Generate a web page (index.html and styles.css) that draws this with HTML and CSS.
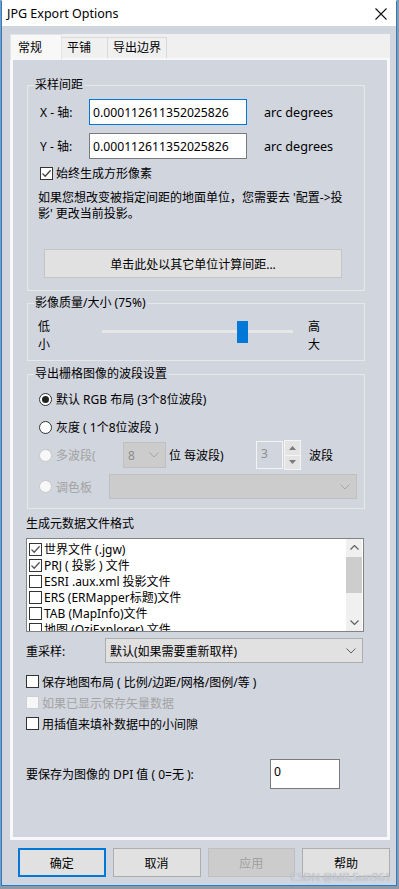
FILE: index.html
```html
<!DOCTYPE html>
<html lang="zh-CN">
<head>
  <meta charset="UTF-8">
  <title>JPG Export Options</title>
  <link rel="stylesheet" href="styles.css">
</head>
<body>
  <div class="window">
    <div class="titlebar">
      <span class="title">JPG Export Options</span>
      <svg class="close" width="12" height="12" viewBox="0 0 12 12"><path d="M0.5 0.5L11.5 11.5M11.5 0.5L0.5 11.5" stroke="#111" stroke-width="1.1" fill="none"/></svg>
    </div>

    <div class="client">
      <div class="tabs">
        <div class="tab-strip">
          <div class="tab active">常规</div>
          <div class="tab t2">平铺</div>
          <div class="tab t3">导出边界</div>
        </div>

        <div class="page">
          <fieldset class="group g-spacing">
            <legend>采样间距</legend>
            <div class="field-row row-x">
              <span class="axis">X - 轴:</span>
              <input class="textbox focused" type="text" value="0.000112611352025826">
              <span class="unit">arc degrees</span>
            </div>
            <div class="field-row">
              <span class="axis">Y - 轴:</span>
              <input class="textbox" type="text" value="0.000112611352025826">
              <span class="unit">arc degrees</span>
            </div>
            <div class="check-row square">
              <span class="cb"><svg width="11" height="11" viewBox="0 0 11 11"><path d="M1.5 5.5L4.2 8.2L9.6 2.2" stroke="#444" stroke-width="1.3" fill="none"/></svg></span>
              <span>始终生成方形像素</span>
            </div>
            <p class="note">如果您想改变被指定间距的地面单位，您需要去 '配置-&gt;投<br>影' 更改当前投影。</p>
            <button class="btn calc">单击此处以其它单位计算间距...</button>
          </fieldset>

          <fieldset class="group g-quality">
            <legend>影像质量/大小 (75%)</legend>
            <div class="quality">
              <div class="ends"><span>低</span><span>小</span></div>
              <div class="slider">
                <div class="track"></div>
                <div class="thumb"></div>
              </div>
              <div class="ends right"><span>高</span><span>大</span></div>
            </div>
          </fieldset>

          <fieldset class="group g-bands">
            <legend>导出栅格图像的波段设置</legend>
            <div class="band-row r1">
              <span class="rb checked"></span>
              <span>默认 RGB 布局 (3个8位波段)</span>
            </div>
            <div class="band-row r2">
              <span class="rb"></span>
              <span>灰度 ( 1个8位波段 )</span>
            </div>
            <div class="band-row r3">
              <span class="rb disabled"></span>
              <span class="dim multi">多波段(</span>
              <div class="combo disabled bits">
                <span>8</span>
                <svg width="10" height="6" viewBox="0 0 10 6"><path d="M0.5 0.5L5 5L9.5 0.5" stroke="#a6a6a6" fill="none"/></svg>
              </div>
              <span class="per">位 每波段)</span>
              <div class="spin">
                <div class="spin-box">3</div>
                <div class="spin-btns">
                  <span><svg width="7" height="4" viewBox="0 0 7 4"><path d="M0 4L3.5 0L7 4Z" fill="#7a7a7a"/></svg></span>
                  <span><svg width="7" height="4" viewBox="0 0 7 4"><path d="M0 0L3.5 4L7 0Z" fill="#7a7a7a"/></svg></span>
                </div>
              </div>
              <span class="bands">波段</span>
            </div>
            <div class="band-row r4">
              <span class="rb disabled"></span>
              <span class="dim palette">调色板</span>
              <div class="combo disabled palette-box">
                <span></span>
                <svg width="10" height="6" viewBox="0 0 10 6"><path d="M0.5 0.5L5 5L9.5 0.5" stroke="#a6a6a6" fill="none"/></svg>
              </div>
            </div>
          </fieldset>

          <div class="section-label">生成元数据文件格式</div>
          <div class="listbox">
            <div class="items">
              <div class="item"><span class="cb"><svg width="11" height="11" viewBox="0 0 11 11"><path d="M1.5 5.5L4.2 8.2L9.6 2.2" stroke="#555" stroke-width="1.3" fill="none"/></svg></span><span>世界文件 (.jgw)</span></div>
              <div class="item"><span class="cb"><svg width="11" height="11" viewBox="0 0 11 11"><path d="M1.5 5.5L4.2 8.2L9.6 2.2" stroke="#555" stroke-width="1.3" fill="none"/></svg></span><span>PRJ ( 投影 ) 文件</span></div>
              <div class="item"><span class="cb"></span><span>ESRI .aux.xml 投影文件</span></div>
              <div class="item"><span class="cb"></span><span>ERS (ERMapper标题)文件</span></div>
              <div class="item"><span class="cb"></span><span>TAB (MapInfo)文件</span></div>
              <div class="item"><span class="cb"></span><span>地图 (OziExplorer) 文件</span></div>
            </div>
            <div class="scrollbar">
              <div class="sb-arrow"><svg width="9" height="5" viewBox="0 0 9 5"><path d="M0.5 4.5L4.5 0.5L8.5 4.5" stroke="#606060" stroke-width="1.2" fill="none"/></svg></div>
              <div class="sb-track"><div class="sb-thumb"></div></div>
              <div class="sb-arrow"><svg width="9" height="5" viewBox="0 0 9 5"><path d="M0.5 0.5L4.5 4.5L8.5 0.5" stroke="#606060" stroke-width="1.2" fill="none"/></svg></div>
            </div>
          </div>

          <div class="resample-row">
            <span class="resample-label">重采样:</span>
            <div class="combo resample">
              <span>默认(如果需要重新取样)</span>
              <svg width="10" height="6" viewBox="0 0 10 6"><path d="M0.5 0.5L5 5L9.5 0.5" stroke="#606060" fill="none"/></svg>
            </div>
          </div>

          <div class="options">
            <div class="check-row"><span class="cb"></span><span>保存地图布局 ( 比例/边距/网格/图例/等 )</span></div>
            <div class="check-row disabled"><span class="cb"></span><span>如果已显示保存矢量数据</span></div>
            <div class="check-row"><span class="cb"></span><span>用插值来填补数据中的小间隙</span></div>
          </div>

          <div class="dpi-row">
            <span class="dpi-label">要保存为图像的 DPI 值 ( 0=无 ):</span>
            <input class="textbox dpi" type="text" value="0">
          </div>
        </div>
      </div>

      <div class="actions">
        <button class="btn action default">确定</button>
        <button class="btn action">取消</button>
        <button class="btn action" disabled>应用</button>
        <button class="btn action">帮助</button>
      </div>
    </div>

    <div class="watermark">CSDN @MR.Sun961</div>
  </div>
</body>
</html>
```

FILE: styles.css
```css
* { box-sizing: border-box; }

body {
  margin: 0;
  background: #8f99a6;
  font-family: "Noto Sans", "Noto Sans CJK SC", sans-serif;
  font-size: 12px;
  color: #000;
}

.window {
  position: relative;
  width: 396px;
  height: 886px;
  margin-left: 1px;
  border: 1px solid #1c7ed6;
  border-top-color: #fff;
  background: #d1d5de;
}

.titlebar {
  height: 25px;
  display: flex;
  align-items: center;
  justify-content: space-between;
  padding: 0 9px 0 5px;
  background: #fff;
}

.title {
  font-size: 12.5px;
}

.client {
  padding: 8px 6px 0 8px;
}

/* tab control */
.tabs {
  height: 806px;
  display: flex;
  flex-direction: column;
}

.tab-strip {
  height: 24px;
  display: flex;
  align-items: flex-end;
  background: #f0f0f0;
}

.tab {
  height: 21px;
  line-height: 19px;
  padding-left: 5px;
  margin-left: -1px;
  border: 1px solid #d9d9d9;
  border-bottom: none;
  background: #f0f0f0;
}

.tab.active {
  position: relative;
  z-index: 1;
  width: 52px;
  height: 26px;
  margin-left: 0;
  margin-bottom: -2px;
  padding: 4px 0 0 7px;
  line-height: 18px;
  background: #f8f8f8;
  border-color: #e4e4e4;
}

.tab.t2 { width: 47px; }
.tab.t3 { width: 60px; }

.page {
  flex: 1;
  padding: 17px 0 0 13px;
  border: 3px solid #f8f8f8;
  border-top-width: 2px;
  background: #d1d5de;
}

/* group boxes */
.group {
  min-width: 0;
  margin: 0 22px 0 1px;
  padding: 0;
  border: 1px solid #e6e7ea;
}

.group legend {
  padding: 0 1px;
  line-height: 16px;
}

.g-spacing {
  padding: 6px 0 12px 12px;
}

.g-spacing legend { margin-left: -6px; }

.field-row {
  height: 26px;
  display: flex;
  align-items: center;
}

.row-x {
  margin-bottom: 8px;
}

.axis {
  width: 49px;
}

.textbox {
  width: 158px;
  height: 26px;
  padding: 0 3px;
  border: 1px solid #7a7a7a;
  background: #fff;
  font: inherit;
  font-size: 12.2px;
  color: #000;
  outline: none;
}

.textbox.focused {
  border-color: #0078d7;
}

.unit {
  margin-left: 17px;
  font-size: 12.6px;
}

.check-row {
  height: 16px;
  display: flex;
  align-items: center;
  gap: 3px;
}

.square {
  margin-top: 6px;
}

.cb {
  width: 13px;
  height: 13px;
  flex: none;
  display: flex;
  align-items: center;
  justify-content: center;
  border: 1px solid #333;
  background: #fff;
}

.note {
  margin: 9px 0 0 -2px;
  line-height: 16px;
  white-space: nowrap;
}

.btn {
  height: 29px;
  padding: 0;
  border: 1px solid #c4c4c4;
  background: #e1e1e1;
  font: inherit;
  color: #000;
}

.calc {
  display: block;
  width: 298px;
  margin: 27px 0 0 4px;
}

/* quality slider */
.g-quality {
  margin-top: 4px;
  padding: 7px 0 6px 10px;
}

.g-quality legend { margin-left: -4px; }

.quality {
  height: 36px;
  display: flex;
}

.ends {
  width: 12px;
  display: flex;
  flex-direction: column;
  line-height: 18px;
}

.ends.right {
  margin-left: 15px;
}

.slider {
  position: relative;
  width: 191px;
  margin-left: 52px;
}

.track {
  height: 3px;
  margin-top: 12px;
  background: #e7e7e7;
}

.thumb {
  position: absolute;
  top: 3px;
  left: 135px;
  width: 11px;
  height: 22px;
  background: #0078d7;
}

/* band settings */
.g-bands {
  margin-top: 5px;
  padding: 9px 0 9px 11px;
}

.g-bands legend { margin-left: -5px; }

.band-row {
  display: flex;
  align-items: center;
}

.r1 { height: 16px; }
.r2 { height: 16px; margin-top: 12px; }
.r3 { height: 28px; margin-top: 6px; }
.r4 { height: 25px; margin-top: 5px; }

.rb {
  width: 13px;
  height: 13px;
  flex: none;
  margin-right: 4px;
  display: flex;
  align-items: center;
  justify-content: center;
  border: 1px solid #333;
  border-radius: 50%;
  background: #fff;
}

.rb.checked::after {
  content: "";
  width: 7px;
  height: 7px;
  border-radius: 50%;
  background: #222;
}

.rb.disabled {
  border-color: #c8c8c8;
  background: #f7f7f7;
}

.dim {
  color: #a3a3a3;
}

.multi { width: 67px; }
.palette { width: 53px; }

.combo {
  height: 25px;
  display: flex;
  align-items: center;
  justify-content: space-between;
  padding: 0 6px 0 4px;
  border: 1px solid #adadad;
  background: #e1e1e1;
}

.combo.disabled {
  border-color: #bfbfbf;
  background: #cccccc;
  color: #8d8d8d;
}

.bits {
  width: 43px;
  height: 26px;
}

.palette-box {
  width: 248px;
  height: 25px;
}

.per {
  width: 87px;
  margin-left: 3px;
}

.spin {
  display: flex;
  align-items: center;
}

.spin-box {
  width: 27px;
  height: 28px;
  padding: 3px 0 0 4px;
  border: 1px solid #f4f4f4;
  color: #8d8d8d;
}

.spin-btns {
  width: 17px;
  height: 30px;
  margin-left: 1px;
  display: flex;
  flex-direction: column;
  border: 1px solid #f4f4f4;
  background: #e4e4e4;
}

.spin-btns span {
  flex: 1;
  display: flex;
  align-items: center;
  justify-content: center;
}

.spin-btns span + span {
  border-top: 1px solid #f4f4f4;
}

.bands {
  margin-left: 8px;
}

/* metadata list */
.section-label {
  margin-top: 7px;
  line-height: 16px;
}

.listbox {
  width: 338px;
  height: 94px;
  margin-top: 6px;
  display: flex;
  border: 1px solid #828282;
  background: #fff;
}

.items {
  flex: 1;
  padding: 2px 0 0 2px;
  overflow: hidden;
}

.item {
  height: 16px;
  display: flex;
  align-items: center;
  gap: 2px;
  white-space: nowrap;
}

.scrollbar {
  width: 16px;
  margin-right: 1px;
  display: flex;
  flex-direction: column;
  background: #f0f0f0;
}

.sb-arrow {
  height: 17px;
  display: flex;
  align-items: center;
  justify-content: center;
}

.sb-track {
  flex: 1;
}

.sb-thumb {
  height: 36px;
  margin-top: 1px;
  background: #cdcdcd;
}

/* resample */
.resample-row {
  height: 25px;
  margin-top: 6px;
  display: flex;
  align-items: center;
}

.resample-label {
  width: 79px;
}

.resample {
  width: 258px;
}

.options {
  margin-top: 8px;
}

.options .check-row {
  height: 21px;
}

.check-row.disabled {
  color: #a3a3a3;
}

.check-row.disabled .cb {
  border-color: #cfcfcf;
  background: #f7f7f7;
}

.dpi-row {
  height: 30px;
  margin-top: 25px;
  display: flex;
  align-items: center;
}

.dpi-label {
  width: 244px;
}

.textbox.dpi {
  width: 70px;
  height: 30px;
  padding: 0 3px 6px;
}

/* dialog buttons */
.actions {
  display: flex;
  gap: 7px;
  margin-top: 8px;
  padding-left: 8px;
}

.action {
  width: 88px;
  border-color: #adadad;
}

.action.default {
  border: 2px solid #0078d7;
}

.action:disabled {
  border-color: #bfbfbf;
  background: #cccccc;
  color: #a0a0a0;
}

.watermark {
  position: absolute;
  right: 5px;
  bottom: 1px;
  font-size: 11px;
  color: #cfd3da;
  text-shadow: 0 0 1px #9aa0a8;
}
```
